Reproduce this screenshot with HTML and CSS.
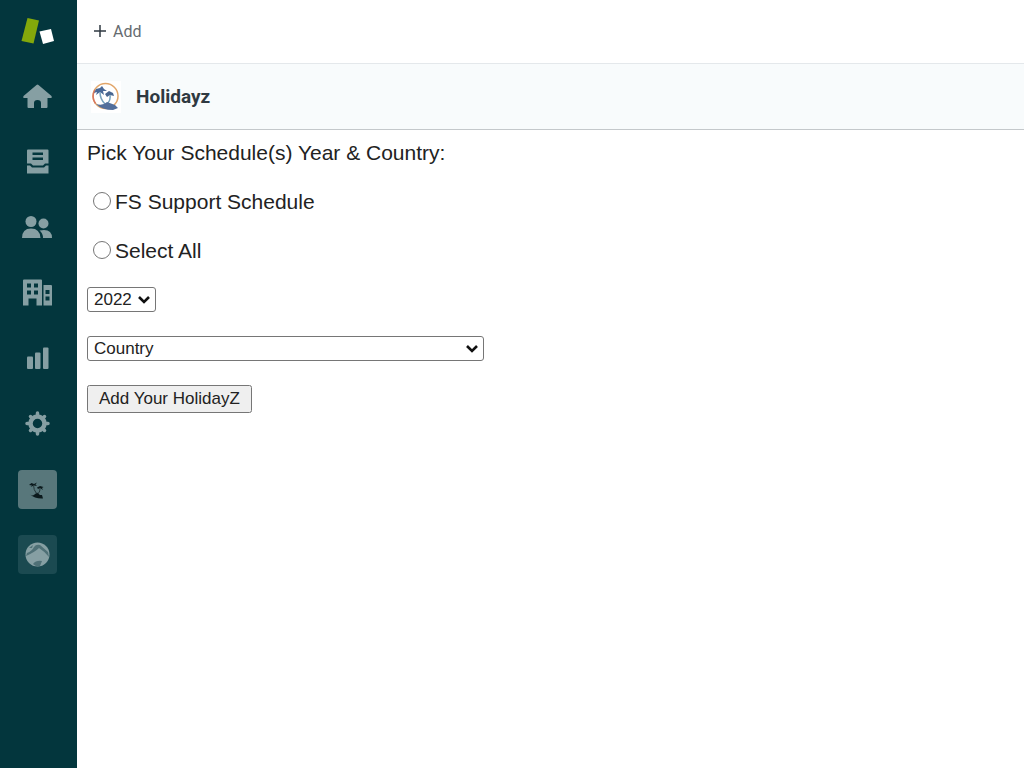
FILE: index.html
```html
<!DOCTYPE html>
<html lang="en">
<head>
    <meta charset="UTF-8">
    <meta name="viewport" content="width=device-width, initial-scale=1.0">
    <title>Holidayz</title>
    <link rel="stylesheet" href="styles.css">
</head>
<body>
    <aside class="sidebar">
        <a href="#" class="logo" aria-label="Logo">
            <svg width="39" height="30" viewBox="0 0 39 30">
                <path d="M9.500 1 L21 3.500 L15.500 26.500 L3.500 24 Z" fill="#84a80b"/>
                <path d="M21.500 14.500 L33 12 L36 24 L25 27 Z" fill="#fff"/>
            </svg>
        </a>
        <nav class="menu">
            <a href="#" aria-label="Home">
                <svg width="39" height="39" viewBox="0 0 39 39">
                    <path d="M18.500 8 Q19.500 7 20.500 8 L33.500 19 Q34.500 21 33 21 H29.500 V30 Q29.500 31 28.500 31 H23 V26 Q23 23 19.500 23 Q16 23 16 26 V31 H10.500 Q9.500 31 9.500 30 V21 H6 Q4.500 21 5.500 19 Z"/>
                </svg>
            </a>
            <a href="#" aria-label="Views">
                <svg width="39" height="39" viewBox="0 0 39 39">
                    <path fill-rule="evenodd" d="M10 7.500 H29.500 Q30.500 7.500 30.500 8.500 V21.500 H27 L25 23.500 H15 L13 21.500 H9 V8.500 Q9 7.500 10 7.500 Z M14.500 10.500 V13 H25 V10.500 Z M14.500 15.500 V18 H25 V15.500 Z"/>
                    <path d="M9 23.500 H12 L14 25.500 H26 L28 23.500 H30.500 V31.500 H9 Z"/>
                </svg>
            </a>
            <a href="#" aria-label="Customers">
                <svg width="39" height="39" viewBox="0 0 39 39">
                    <circle cx="13" cy="13.500" r="5.500"/>
                    <circle cx="25.500" cy="15.500" r="5"/>
                    <path d="M4 30 Q4 20.500 13 20.500 Q22 20.500 22.500 30 Z"/>
                    <path d="M21.500 22.500 Q34 20 34 30 H25 Q25 25 21.500 22.500 Z"/>
                </svg>
            </a>
            <a href="#" aria-label="Organizations">
                <svg width="39" height="39" viewBox="0 0 39 39">
                    <path fill-rule="evenodd" d="M6 6.500 H23 Q24 6.500 24 7.500 V32.500 H18.500 V25.500 H10.500 V32.500 H5 V7.500 Q5 6.500 6 6.500 Z M9 10.500 V14.500 H13 V10.500 Z M16 10.500 V14.500 H20 V10.500 Z M9 17.500 V21.500 H13 V17.500 Z M16 17.500 V21.500 H20 V17.500 Z"/>
                    <path fill-rule="evenodd" d="M25.500 12 H33 Q34 12 34 13 V32.500 H25.500 Z M27.500 17 V21 H31.500 V17 Z M27.500 23.500 V27.500 H31.500 V23.500 Z"/>
                </svg>
            </a>
            <a href="#" aria-label="Reporting">
                <svg width="39" height="39" viewBox="0 0 39 39">
                    <rect x="9" y="17.500" width="6" height="12.500" rx="1"/>
                    <rect x="17" y="13.500" width="5.500" height="16.500" rx="1"/>
                    <rect x="25" y="8.500" width="5.500" height="21.500" rx="1"/>
                </svg>
            </a>
            <a href="#" aria-label="Admin">
                <svg width="39" height="39" viewBox="0 0 39 39">
                    <circle cx="19.500" cy="19.500" r="7" fill="none" stroke="#869fa3" stroke-width="4.500"/>
                    <path d="M19.500 11 V9 M19.500 28 V30 M11 19.500 H9 M28 19.500 H30 M13.500 13.500 L12.500 12.500 M25.500 13.500 L26.500 12.500 M13.500 25.500 L12.500 26.500 M25.500 25.500 L26.500 26.500" fill="none" stroke="#869fa3" stroke-width="3.500" stroke-linecap="round"/>
                </svg>
            </a>
            <a href="#" class="app active" aria-label="Holidayz">
                <svg width="39" height="39" viewBox="0 0 39 39">
                    <g fill="#0b1a1d">
                        <path d="M11 15 L13.500 13 L16 14 L19 12.500 L17.500 14.500 L19 16 L16 15.500 L12.500 17 L14 15.500 Z"/>
                        <path d="M19 17.500 L22 16 L25.500 17 L24 18 L25 20 L22 18 L20 19 Z"/>
                        <path d="M11.500 24 Q14 26.500 16.500 24.500 L19 22.500 L22 25 L24 25 L25 28.500 Q17 29 11.500 24 Z"/>
                    </g>
                    <path d="M15.500 15 Q15.500 20 18.500 23.500 M22 18 Q22.500 21 20 24" fill="none" stroke="#26393c"/>
                </svg>
            </a>
            <a href="#" class="app" aria-label="World app">
                <svg width="39" height="39" viewBox="0 0 39 39">
                    <circle cx="19.500" cy="19.500" r="12"/>
                    <path d="M9 18 Q14 16 16 12 Q18 9 22 10 L30 17 L31 22 Q26 16 21 13 Q17 17 8 21 Z M15 29 Q18 25 24 26 L22 31 Q18 32 15 29 Z M11 13 L15 10 L14 13 Z" fill="#4f7076"/>
                </svg>
            </a>
        </nav>
    </aside>

    <div class="page">
        <header class="topbar">
            <button type="button" class="add">
                <svg width="14" height="14" viewBox="0 0 14 14">
                    <path d="M7 0 V12 M1 6 H13" fill="none" stroke="#2f3941" stroke-width="1.500"/>
                </svg>
                Add
            </button>
        </header>
        <div class="app-title">
            <svg width="30" height="32" viewBox="0 0 30 32">
                <rect width="30" height="32" fill="#fff"/>
                <circle cx="14.500" cy="15" r="12.500" fill="#fff" stroke="#e2a66a" stroke-width="1.500"/>
                <path d="M4.500 22.500 A12.500 12.500 0 0 1 4 9" fill="none" stroke="#d9765f" stroke-width="1.500"/>
                <path d="M3 12 L5 8 L9 7 L11 5 L13 8 L16 10 L12 10 L13 14 L9 11 L5 14 L6 11 Z" fill="#4a6998"/>
                <path d="M14 13 L18 10 L22 12 L23 15 L19 14 L16 16 Z" fill="#496690"/>
                <path d="M9 11 Q9 18 14 23 M19 14 Q20 19 16 23" fill="none" stroke="#77a2bd" stroke-width="1.500"/>
                <path d="M5 23 Q12 25 16 21 L24 24 L27 27 L22 29 Q11 29 5 23 Z" fill="#536f9b"/>
            </svg>
            <h1>Holidayz</h1>
        </div>
        <main>
            <form class="schedule">
                <p>Pick Your Schedule(s) Year &amp; Country:</p>
                <label class="option"><input type="radio" name="schedule" value="fs">FS Support Schedule</label>
                <label class="option"><input type="radio" name="schedule" value="all">Select All</label>
                <select class="year" aria-label="Year">
                    <option>2022</option>
                    <option>2023</option>
                </select>
                <select class="country" aria-label="Country">
                    <option>Country</option>
                </select>
                <button type="button" class="submit">Add Your HolidayZ</button>
            </form>
        </main>
    </div>
</body>
</html>
```
FILE: styles.css
```css
* {
    box-sizing: border-box;
}

body {
    margin: 0;
    display: flex;
    min-height: 100vh;
    background: #fff;
    font-family: "Liberation Sans", Arial, sans-serif;
    color: #222;
}

.sidebar {
    width: 77px;
    flex-shrink: 0;
    padding: 17px 18px;
    background: #03363d;
}

.sidebar svg {
    display: block;
}

.logo {
    display: block;
    margin-bottom: 30px;
}

.menu {
    display: flex;
    flex-direction: column;
    align-items: flex-start;
    justify-content: space-between;
    min-height: 497px;
    fill: #869fa3;
}

.app {
    border-radius: 4px;
    background: #1b4a51;
}

.app.active {
    background: #58777b;
}

.page {
    flex: 1;
}

.topbar {
    display: flex;
    align-items: center;
    height: 63px;
    padding: 0 16px;
}

.add {
    display: flex;
    align-items: center;
    gap: 6px;
    padding: 0;
    border: none;
    background: none;
    font-family: Roboto, sans-serif;
    font-size: 16px;
    color: #666b70;
}

.app-title {
    display: flex;
    align-items: center;
    gap: 15px;
    height: 67px;
    padding: 0 14px;
    border-top: 1px solid #e4e8eb;
    border-bottom: 1px solid #c4c8cb;
    background: #f8fbfc;
}

.app-title h1 {
    margin: 0;
    font-family: Roboto, sans-serif;
    font-size: 19px;
    font-weight: 700;
    color: #2f3941;
}

.schedule {
    display: flex;
    flex-direction: column;
    align-items: flex-start;
    gap: 24px;
    padding: 10px;
    font-size: 21px;
    line-height: 25px;
}

.schedule p {
    margin: 0;
}

.option {
    display: flex;
    align-items: center;
    gap: 4px;
}

.option input {
    width: 18px;
    height: 18px;
    margin: 0 0 2px 6px;
}

.schedule select,
.submit {
    height: 25px;
    font-family: inherit;
    font-size: 17px;
    color: #222;
}

.schedule select {
    appearance: none;
    padding: 0 6px;
    border: 1px solid #767676;
    border-radius: 3px;
    background: #fff url("data:image/svg+xml,%3Csvg xmlns='http://www.w3.org/2000/svg' width='14' height='10'%3E%3Cpath d='M2 2 L7 7 L12 2' fill='none' stroke='%23111' stroke-width='2.6'/%3E%3C/svg%3E") no-repeat right 4px center;
}

.year {
    width: 69px;
}

.country {
    width: 397px;
    max-width: 100%;
}

.schedule .submit {
    height: 28px;
    padding: 0 10px;
}
```
